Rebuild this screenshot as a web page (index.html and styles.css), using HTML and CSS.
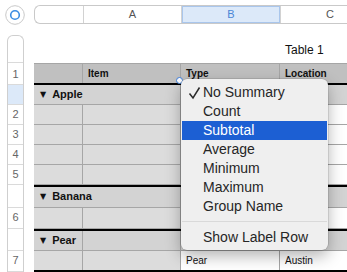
FILE: index.html
```html
<!DOCTYPE html>
<html lang="en">
<head>
    <meta charset="UTF-8">
    <title>Numbers - Table 1</title>
    <link rel="stylesheet" href="styles.css">
</head>
<body>
    <div class="sheet">
        <!-- Barra de columnas -->
        <div class="top">
            <div class="corner">
                <svg width="20" height="20" viewBox="0 0 20 20">
                    <circle cx="10" cy="10" r="9.3" fill="#fff" stroke="#c9c9c9" stroke-width="1"/>
                    <circle cx="10" cy="10" r="4.3" fill="none" stroke="#3b8ce3" stroke-width="1.6"/>
                </svg>
            </div>
            <div class="col-head">
                <div class="ch"></div>
                <div class="ch">A</div>
                <div class="ch sel">B</div>
                <div class="ch">C</div>
            </div>
        </div>

        <div class="body">
            <!-- Barra de filas -->
            <div class="row-head">
                <div class="rh cap"></div>
                <div class="rh h-head">1</div>
                <div class="rh sel"></div>
                <div class="rh">2</div>
                <div class="rh">3</div>
                <div class="rh">4</div>
                <div class="rh">5</div>
                <div class="rh h-banana"></div>
                <div class="rh h-6">6</div>
                <div class="rh h-pear"></div>
                <div class="rh h-7">7</div>
            </div>

            <div class="main">
                <div class="caption">Table 1</div>
                <div class="table">
                    <div class="row head">
                        <div class="cell"></div>
                        <div class="cell">Item</div>
                        <div class="cell">Type</div>
                        <div class="cell">Location</div>
                    </div>
                    <div class="row group">
                        <div class="cell wide"><span class="tri">▼</span>Apple</div>
                        <div class="cell"></div>
                        <div class="cell"></div>
                    </div>
                    <div class="row data"><div class="cell"></div><div class="cell"></div><div class="cell"></div><div class="cell"></div></div>
                    <div class="row data"><div class="cell"></div><div class="cell"></div><div class="cell"></div><div class="cell"></div></div>
                    <div class="row data"><div class="cell"></div><div class="cell"></div><div class="cell"></div><div class="cell"></div></div>
                    <div class="row data"><div class="cell"></div><div class="cell"></div><div class="cell"></div><div class="cell"></div></div>
                    <div class="row group sep banana">
                        <div class="cell wide"><span class="tri">▼</span>Banana</div>
                        <div class="cell"></div>
                        <div class="cell"></div>
                    </div>
                    <div class="row data r6"><div class="cell"></div><div class="cell"></div><div class="cell"></div><div class="cell"></div></div>
                    <div class="row group sep">
                        <div class="cell"><span class="tri">▼</span>Pear</div>
                        <div class="cell"></div>
                        <div class="cell"></div>
                        <div class="cell"></div>
                    </div>
                    <div class="row data last">
                        <div class="cell"></div>
                        <div class="cell"></div>
                        <div class="cell">Pear</div>
                        <div class="cell">Austin</div>
                    </div>
                </div>
            </div>
        </div>

        <!-- Celda seleccionada -->
        <div class="sel-edge"></div>
        <div class="sel-knob"></div>

        <!-- Menú de resumen -->
        <div class="menu">
            <div class="item checked">
                <svg class="check" width="14" height="14" viewBox="0 0 14 14">
                    <polyline points="1.5,7.5 5,12 11.5,1.5" fill="none" stroke="#2b2b2b" stroke-width="1.5"/>
                </svg>
                No Summary
            </div>
            <div class="item">Count</div>
            <div class="item active">Subtotal</div>
            <div class="item">Average</div>
            <div class="item">Minimum</div>
            <div class="item">Maximum</div>
            <div class="item">Group Name</div>
            <div class="divider"></div>
            <div class="item">Show Label Row</div>
        </div>
    </div>
</body>
</html>
```

FILE: styles.css
```css
* {
    margin: 0;
    padding: 0;
    box-sizing: border-box;
}

body {
    font-family: 'Liberation Sans', Arial, sans-serif;
    background: #fff;
}

.sheet {
    position: relative;
    width: 347px;
    height: 272px;
    overflow: hidden;
}

/* Barra superior */
.top {
    display: flex;
    gap: 9px;
    padding: 5px 0 0 5px;
}

.corner {
    width: 20px;
    height: 20px;
}

.col-head {
    display: grid;
    grid-template-columns: 49px 98px 99px 99px;
    height: 19px;
    border: 1px solid #c9c9c9;
    border-right: none;
    border-radius: 6px 0 0 6px;
    overflow: hidden;
    flex-shrink: 0;
}

.ch {
    border-right: 1px solid #d2d2d2;
    font-size: 11px;
    color: #555;
    text-align: center;
    line-height: 17px;
}

.ch.sel {
    background: #dce9f9;
    color: #4a86d6;
    box-shadow: inset 0 0 0 1px #a9c6ec;
}

/* Zona de la tabla */
.body {
    display: flex;
    margin-top: 10px;
}

.row-head {
    margin-left: 7px;
    width: 17px;
    border: 1px solid #cfcfcf;
    border-bottom: none;
    border-radius: 6px 6px 0 0;
    flex-shrink: 0;
}

.rh {
    height: 20px;
    border-bottom: 1px solid #dadada;
    font-size: 11px;
    color: #666;
    text-align: center;
    line-height: 19px;
}

.rh.cap { height: 27px; }
.rh.h-head { height: 22px; line-height: 22px; }
.rh.sel { background: #dce9f9; }
.rh.h-banana { height: 23px; }
.rh.h-6 { height: 21px; }
.rh.h-pear { height: 22px; }
.rh.h-7 { height: 21px; line-height: 19px; }

.main {
    margin-left: 10px;
    flex-shrink: 0;
}

.caption {
    height: 28px;
    padding-left: 251px;
    padding-top: 8px;
    font-size: 12px;
    color: #111;
}

.table {
    width: 345px;
}

.row {
    display: grid;
    grid-template-columns: 49px 98px 99px 99px;
    height: 20px;
    border-bottom: 1px solid #a6a6a6;
}

.cell {
    border-right: 1px solid #a6a6a6;
    font-size: 10px;
    padding-left: 5px;
    line-height: 19px;
    color: #111;
    white-space: nowrap;
}

.row.head {
    background: #c0c0c0;
    height: 22px;
    border-top: 1px solid #a6a6a6;
    border-bottom: 2px solid #000;
}

.row.head .cell {
    font-weight: bold;
    line-height: 19px;
}

.row.group {
    background: #d3d3d3;
}

.row.group .cell {
    font-weight: bold;
    font-size: 11px;
    padding-left: 6px;
}

.cell.wide {
    grid-column: span 2;
}

.tri {
    font-family: 'DejaVu Sans', sans-serif;
    font-size: 8px;
    margin-right: 6px;
    position: relative;
    top: -1px;
}

.row.sep {
    height: 22px;
    border-top: 2px solid #000;
}

.row.banana { height: 23px; }

.row.data .cell:nth-child(-n+2) {
    background: #dcdcdc;
}

.row.data .cell:nth-child(n+3) {
    background: #fff;
}

.row.r6 { height: 21px; }

.row.last {
    height: 21px;
    border-bottom: 2px solid #000;
}

/* Selección */
.sel-edge {
    position: absolute;
    left: 181px;
    top: 80px;
    width: 1px;
    height: 25px;
    background: #3b7ddd;
}

.sel-knob {
    position: absolute;
    left: 176px;
    top: 77px;
    width: 7px;
    height: 7px;
    border-radius: 50%;
    background: #fff;
    border: 1px solid #3b7ddd;
}

/* Menú emergente */
.menu {
    position: absolute;
    left: 181px;
    top: 79px;
    width: 147px;
    padding: 4px 1px 3px;
    background: #efefef;
    border-radius: 6px;
    box-shadow: 0 0 0 0.5px rgba(0, 0, 0, 0.18), 0 6px 16px rgba(0, 0, 0, 0.3);
}

.item {
    position: relative;
    height: 19px;
    padding-left: 21px;
    font-size: 14px;
    line-height: 19px;
    color: #262626;
    border-radius: 0;
}

.item.active {
    background: #1c5fd3;
    color: #fff;
}

.check {
    position: absolute;
    left: 6px;
    top: 3px;
}

.divider {
    height: 1px;
    margin: 5px 0 6px;
    background: #d9d9d9;
}
```
